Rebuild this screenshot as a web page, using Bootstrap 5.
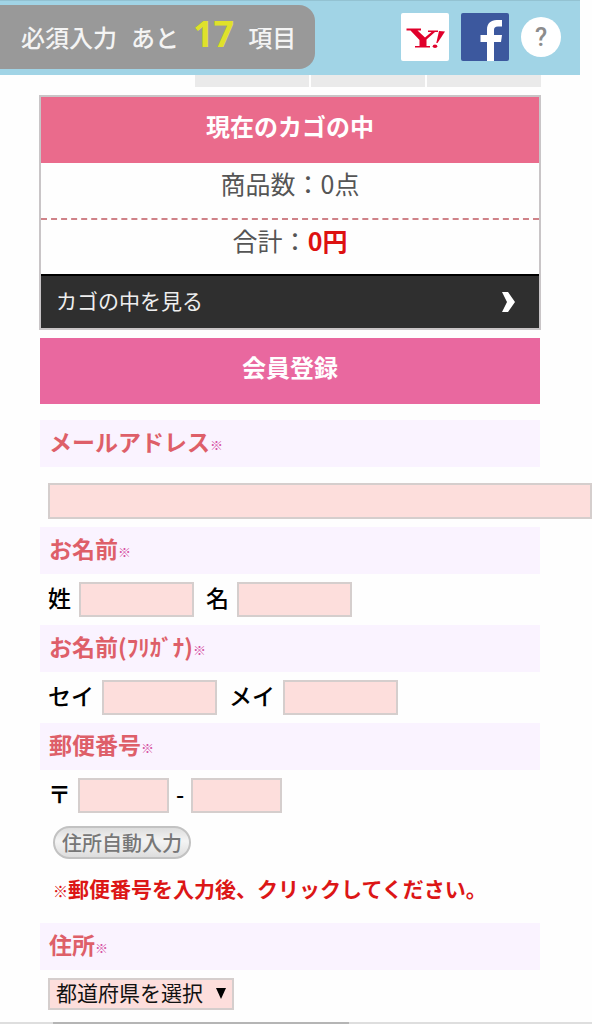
<!DOCTYPE html>
<html lang="ja">
<head>
<meta charset="utf-8">
<meta name="viewport" content="width=device-width, initial-scale=1">
<title>会員登録</title>
<link href="https://cdn.jsdelivr.net/npm/bootstrap@5.3.0/dist/css/bootstrap.min.css" rel="stylesheet">
<style>
body{font-family:"Noto Sans CJK JP",sans-serif;color:#000;background:#fefefe;overflow-x:hidden}
/* top bar */
.topbar{background:#a1d4e6;height:75px;margin-right:12px;padding-right:19px;border-top:1px solid #93c2d2}
.remain{background:#999;color:#f4f4f4;height:64px;margin-top:4px;padding:0 19px 0 21px;border-radius:0 16px 16px 0;font-size:24px;line-height:32px;font-weight:500;gap:14px}
.remain-count{color:#dfe12a;font:bold 36px/40px "Noto Sans",sans-serif;padding-bottom:6px}
.socials{gap:12px;padding-top:12px}
.tile{width:48px;height:48px;display:block}
.help{width:40px;height:40px;border:0;border-radius:50%;background:#fff;color:#8c8c8c;font-family:Roboto,sans-serif;font-size:25px;font-weight:500;line-height:42px}
.page{margin:0 52px 0 40px}
.tabs-edge{height:12px;margin:0 -1px 8px 155px;gap:2px}
.tabs-edge span{background:#eaeaea}
/* cart */
.cart{border:2px solid #c9c5c7;margin:0 -1px 0 -1px}
.bar{height:66px;line-height:58px;font-size:24px;font-weight:700;color:#fff;text-align:center;margin:0}
.bar-cart{background:#ea6b8c}
.bar-form{background:#e9689f;margin-top:8px;margin-bottom:16px}
.cart-line{height:55px;line-height:40px;font-size:25px;color:#555;text-align:center}
.cart-line + .cart-line{border-top:2px dashed #cf8288;height:56px}
.cart-line strong{color:#dd1111;font-size:25px}
.cart-link{background:#2f2f2f;border-top:2px solid #000;color:#eee;font-size:21px;line-height:48px;padding:0 24px 4px 15px}
.cart-link svg{margin-top:4px}
.cart-link:hover{color:#fff}
/* form */
.head{background:#faf3ff;height:47px;line-height:42px;padding-left:9px;margin:0;font-size:23px;font-weight:700;color:#de5f69}
.req{font-size:13px;font-weight:700;color:#d653a4;vertical-align:1px}
.fields{padding:8px;font-size:23px;line-height:30px;font-weight:500;gap:8px}
.fields-zip{gap:7px}
.field{background:#fddedc;border:2px solid #d5cecd;border-radius:0;height:35px;width:115px;padding:0 6px;font-size:21px}
.field-zip{width:91px}
.field-mail{width:calc(100% + 60px);height:36px}
.auto{margin:5px 0 0 13px;height:33px;border:2px solid #c2c2c2;border-radius:17px;background:linear-gradient(#ddd,#f4f4f4 45%,#ddd);color:#777;font-size:20px;font-weight:500;line-height:28px;padding:0 7px}
.note{margin:14px 0 17px 13px;font-size:21px;line-height:31px;font-weight:700;color:#dc1616}
.note small{font-size:15px}
.pref{appearance:none;background:#fddedc;border:2px solid #d5cecd;border-radius:0;height:32px;width:186px;padding:0 20px 4px 6px;font-size:21px;line-height:24px;font-weight:400;color:#111}
.pref-arrow{right:8px;top:10px;pointer-events:none}
.scroll-track{height:2px;background:#dedede;margin-top:4px}
.scroll-track div{width:50%;height:2px;background:#b5b5b5;margin-left:9%}
</style>
</head>
<body>
<header class="topbar d-flex justify-content-between align-items-start">
  <div class="remain d-flex align-items-center text-nowrap">
    <span>必須入力</span><span>あと</span><strong class="remain-count">17</strong><span>項目</span>
  </div>
  <div class="socials d-flex align-items-end">
    <a href="#" aria-label="Yahoo!">
      <svg class="tile" viewBox="0 0 48 48"><rect width="48" height="48" rx="2" fill="#fff"/><path fill="#e0002b" d="M5.500 15.500H20v2h-3.500l7.500 7 6.500-5.500h-3.500v-1.500h10V19h-3l-8.500 7.500V33h3.500v1.500H14V33h4.500v-6L9.500 17.500h-4z"/><path fill="#e0002b" d="M38 18l6 .5L36.500 30h-1.200z"/><ellipse cx="34" cy="33.200" rx="2.300" ry="1.700" fill="#e0002b"/></svg>
    </a>
    <a href="#" aria-label="Facebook">
      <svg class="tile" viewBox="0 0 48 48"><rect width="48" height="48" rx="2" fill="#3c589e"/><path fill="#fff" d="M26 48V29h-6.500v-7H26v-5.500C26 10.500 30 7 35.500 7H41v6.500h-4c-3 0-4 1.200-4 3.500v5h8l-1 7h-7v19z"/></svg>
    </a>
    <button type="button" class="help p-0 mb-1" aria-label="ヘルプ">?</button>
  </div>
</header>

<main class="page">
  <div class="tabs-edge d-flex"><span class="flex-fill"></span><span class="flex-fill"></span><span class="flex-fill"></span></div>

  <section class="cart">
    <h2 class="bar bar-cart">現在のカゴの中</h2>
    <div class="cart-line">商品数：0点</div>
    <div class="cart-line">合計：<strong>0円</strong></div>
    <a href="#" class="cart-link d-flex justify-content-between align-items-center text-decoration-none">カゴの中を見る
      <svg width="13" height="20" viewBox="0 0 13 20" aria-hidden="true"><path fill="#fff" d="M0 0h6l7 10-7 10H0l5-10z"/></svg>
    </a>
  </section>

  <h1 class="bar bar-form">会員登録</h1>

  <form>
    <h3 class="head"><label for="mail">メールアドレス</label><span class="req">※</span></h3>
    <div class="fields d-flex pt-3"><input id="mail" type="email" class="field field-mail flex-shrink-0"></div>

    <h3 class="head">お名前<span class="req">※</span></h3>
    <div class="fields d-flex">
      <label for="sei">姓</label><input id="sei" type="text" class="field me-1">
      <label for="mei">名</label><input id="mei" type="text" class="field">
    </div>

    <h3 class="head">お名前(ﾌﾘｶﾞﾅ)<span class="req">※</span></h3>
    <div class="fields d-flex">
      <label for="sei2">セイ</label><input id="sei2" type="text" class="field me-1">
      <label for="mei2">メイ</label><input id="mei2" type="text" class="field">
    </div>

    <h3 class="head">郵便番号<span class="req">※</span></h3>
    <div class="fields fields-zip d-flex">
      <label for="zip1" class="fw-bold">〒</label><input id="zip1" type="text" class="field field-zip">
      <label for="zip2">-</label><input id="zip2" type="text" class="field field-zip">
    </div>
    <button type="button" class="auto d-block">住所自動入力</button>
    <p class="note text-nowrap"><small>※</small>郵便番号を入力後、クリックしてください。</p>

    <h3 class="head"><label for="pref">住所</label><span class="req">※</span></h3>
    <div class="fields d-flex">
      <div class="position-relative">
        <select id="pref" class="pref d-block"><option>都道府県を選択</option></select>
        <svg class="pref-arrow position-absolute" width="10" height="11" viewBox="0 0 10 11" aria-hidden="true"><path d="M0 0h10L5 11z"/></svg>
      </div>
    </div>
  </form>
</main>
<div class="scroll-track"><div></div></div>
<script src="https://cdn.jsdelivr.net/npm/bootstrap@5.3.0/dist/js/bootstrap.bundle.min.js"></script>
</body>
</html>
